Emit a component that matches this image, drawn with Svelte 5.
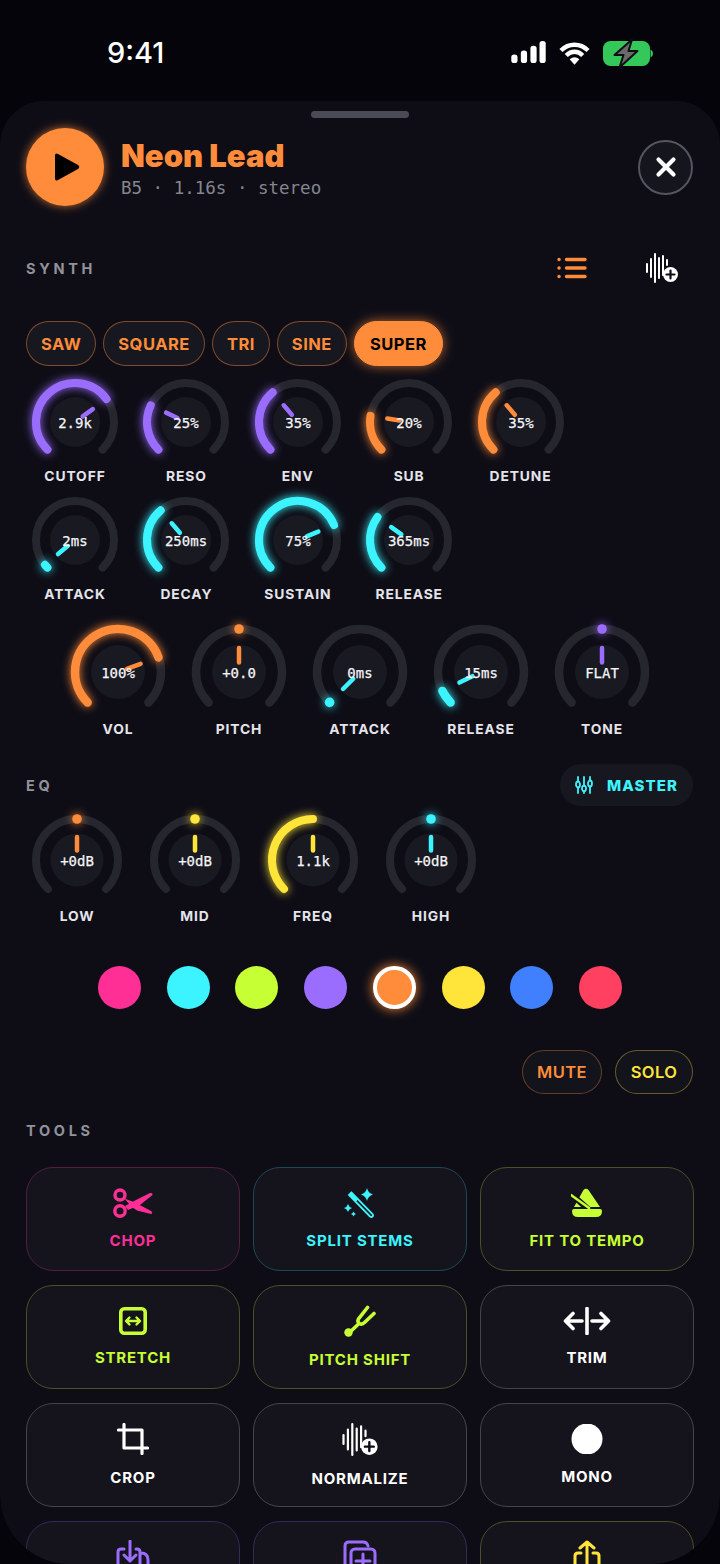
<script>
  const ORANGE = '#ff8c3a', PURPLE = '#9b6dff', CYAN = '#3cf4ff', LIME = '#c6ff33', YELLOW = '#ffe53a', PINK = '#ff2f96';

  const waves = ['SAW', 'SQUARE', 'TRI', 'SINE', 'SUPER'];
  const rowOne = [
    { label: 'CUTOFF', value: '2.9k', pct: 0.7, color: PURPLE },
    { label: 'RESO', value: '25%', pct: 0.26, color: PURPLE },
    { label: 'ENV', value: '35%', pct: 0.35, color: PURPLE },
    { label: 'SUB', value: '20%', pct: 0.2, color: ORANGE },
    { label: 'DETUNE', value: '35%', pct: 0.35, color: ORANGE }
  ];
  const rowTwo = [
    { label: 'ATTACK', value: '2ms', pct: 0.02, color: CYAN },
    { label: 'DECAY', value: '250ms', pct: 0.35, color: CYAN },
    { label: 'SUSTAIN', value: '75%', pct: 0.75, color: CYAN },
    { label: 'RELEASE', value: '365ms', pct: 0.3, color: CYAN }
  ];
  const rowThree = [
    { label: 'VOL', value: '100%', pct: 0.76, color: ORANGE },
    { label: 'PITCH', value: '+0.0', pct: 0.5, dot: true, color: ORANGE },
    { label: 'ATTACK', value: '0ms', pct: 0, dot: true, color: CYAN },
    { label: 'RELEASE', value: '15ms', pct: 0.07, color: CYAN },
    { label: 'TONE', value: 'FLAT', pct: 0.5, dot: true, color: PURPLE }
  ];
  const rowEq = [
    { label: 'LOW', value: '+0dB', pct: 0.5, dot: true, color: ORANGE },
    { label: 'MID', value: '+0dB', pct: 0.5, dot: true, color: YELLOW },
    { label: 'FREQ', value: '1.1k', pct: 0.5, color: YELLOW },
    { label: 'HIGH', value: '+0dB', pct: 0.5, dot: true, color: CYAN }
  ];
  const swatches = [PINK, CYAN, LIME, PURPLE, ORANGE, YELLOW, '#4080ff', '#ff4060'];
  // last row runs off the bottom of the screen, its labels are never seen
  const tools = [
    { name: 'CHOP', icon: 'scissors', color: PINK, border: '#521e40' },
    { name: 'SPLIT STEMS', icon: 'wand', color: CYAN, border: '#1f4855' },
    { name: 'FIT TO TEMPO', icon: 'metronome', color: LIME, border: '#465228' },
    { name: 'STRETCH', icon: 'stretch', color: LIME, border: '#465228' },
    { name: 'PITCH SHIFT', icon: 'fork', color: LIME, border: '#465228' },
    { name: 'TRIM', icon: 'trim', color: '#fff', border: '#44444e' },
    { name: 'CROP', icon: 'crop', color: '#fff', border: '#44444e' },
    { name: 'NORMALIZE', icon: 'wave', color: '#fff', border: '#44444e' },
    { name: 'MONO', icon: 'mono', color: '#fff', border: '#44444e' },
    { name: '', icon: 'import', color: PURPLE, border: '#322b58' },
    { name: '', icon: 'copy', color: PURPLE, border: '#322b58' },
    { name: '', icon: 'share', color: YELLOW, border: '#504d28' }
  ];

  // angle is measured clockwise from 12 o'clock, the sweep runs -135..135
  function polar(c, r, deg) {
    const a = (deg * Math.PI) / 180;
    return [c + r * Math.sin(a), c - r * Math.cos(a)];
  }
  function arc(c, r, from, to) {
    const [x1, y1] = polar(c, r, from);
    const [x2, y2] = polar(c, r, to);
    const large = to - from > 180 ? 1 : 0;
    return `M${x1.toFixed(2)} ${y1.toFixed(2)}A${r} ${r} 0 ${large} 1 ${x2.toFixed(2)} ${y2.toFixed(2)}`;
  }
  function angle(pct) {
    return -135 + pct * 270;
  }
</script>

{#snippet knob(k, box, cell, r, sw, disk, tipOut)}
  {@const c = box / 2}
  {@const a = angle(k.pct)}
  {@const n1 = polar(c, 9.5, a)}
  {@const n2 = polar(c, tipOut, a)}
  {@const p = polar(c, r, a)}
  <div class="knob" style="width:{cell}px;--c:{k.color}">
    <svg width={box} height={box} viewBox="0 0 {box} {box}">
      <path d={arc(c, r, -135, 135)} fill="none" stroke="#26262e" stroke-width={sw} stroke-linecap="round" />
      <circle cx={c} cy={c} r={disk} fill="#191922" />
      {#if k.dot}
        <circle class="glow" cx={p[0]} cy={p[1]} r="4.8" fill={k.color} />
      {:else}
        <path class="glow" d={arc(c, r, -135, a)} fill="none" stroke={k.color} stroke-width={sw} stroke-linecap="round" />
      {/if}
      <line x1={n1[0]} y1={n1[1]} x2={n2[0]} y2={n2[1]} stroke={k.color} stroke-width="4.5" stroke-linecap="round" />
      <text x={c} y={c + 0.5} class="val">{k.value}</text>
    </svg>
    <span class="klabel">{k.label}</span>
  </div>
{/snippet}

{#snippet waveIcon(w, h)}
  <svg width={w} height={h} viewBox="0 0 34 30" fill="none" stroke="#fff" stroke-width="2" stroke-linecap="round">
    <path d="M2 11v8M6 6v18M10 1v28M14 5v20M18 3v19M22 7v5" />
    <circle cx="25.5" cy="21.5" r="7.5" fill="#fff" stroke="none" />
    <path d="M25.5 17.5v8M21.5 21.5h8" stroke="#0e0d16" stroke-width="2.2" />
  </svg>
{/snippet}

{#snippet toolIcon(name)}
  {#if name === 'scissors'}
    <svg width="40" height="30" viewBox="0 0 40 30" fill="none" stroke="currentColor" stroke-width="3.4">
      <circle cx="7" cy="7" r="5" /><circle cx="7" cy="23" r="5.2" />
      <path d="M12 18L24 11.500 37 5q3-.5 2.500 2L27 17l-12 5z" fill="currentColor" stroke="none" />
      <path d="M11.500 10.500L22 14.500l16 8.500q2.500 2 0 3L24 22.500l-6-4z" fill="currentColor" stroke="none" />
    </svg>
  {:else if name === 'wand'}
    <svg width="32" height="30" viewBox="0 0 32 30" fill="none" stroke="currentColor">
      <path d="M7.500 4.500l-2.500 2.500 21 21.500q1.500 1 2.500 0t0-2.500z" stroke-width="1.800" />
      <path d="M7 4.500l-2 2.500 6.500 6.500 2.500-2.500z" fill="currentColor" stroke-width="1" />
      <path d="M23 0q1 5 6 6.500q-5 1.500-6 6.500q-1-5-6-6.500q5-1.500 6-6.500zM4 16q.7 3 4 4q-3.300 1-4 4q-.7-3-4-4q3.300-1 4-4zM9.500 23.500q.4 1.800 2.500 2.500q-2.100.7-2.500 2.500q-.4-1.800-2.500-2.500q2.100-.7 2.500-2.500z" fill="currentColor" stroke="none" />
    </svg>
  {:else if name === 'metronome'}
    <svg width="32" height="30" viewBox="0 0 32 30" fill="none">
      <path d="M12.500 2q2.500-2.500 5 0L29 19H3z" fill="currentColor" />
      <path d="M-1 5L17 21" stroke="#14131b" stroke-width="6" />
      <path d="M0 7L18 20" stroke="currentColor" stroke-width="2.600" stroke-linecap="round" />
      <path d="M3 21h26q2 0 2 2 0 6-6 6H7q-6 0-6-6 0-2 2-2z" fill="currentColor" />
    </svg>
  {:else if name === 'stretch'}
    <svg width="28" height="28" viewBox="0 0 28 28" fill="none" stroke="currentColor" stroke-width="3.600" stroke-linecap="round" stroke-linejoin="round">
      <rect x="1.800" y="1.800" width="24.400" height="24.400" rx="3.500" />
      <path d="M7.500 14h13M10.500 10.500L7 14l3.500 3.500M17.500 10.500L21 14l-3.500 3.500" stroke-width="2.400" />
    </svg>
  {:else if name === 'fork'}
    <svg width="32" height="32" viewBox="0 0 32 32" fill="none" stroke="currentColor" stroke-width="3.600" stroke-linecap="round">
      <path d="M23.500 2.500L14.500 14q-1.500 3 1 4.500 2.500 1.500 5-1L30 8.500M14.500 19L5 28" />
      <circle cx="4.500" cy="27.500" r="4.200" fill="currentColor" stroke="none" />
    </svg>
  {:else if name === 'trim'}
    <svg width="48" height="28" viewBox="0 0 48 28" fill="none" stroke="currentColor" stroke-width="3.600" stroke-linecap="round" stroke-linejoin="round">
      <path d="M24 1.500v25M19 14H3M10 6.500L2.500 14l7.500 7.500M29 14h16M38 6.500l7.500 7.500-7.500 7.500" />
    </svg>
  {:else if name === 'crop'}
    <svg width="32" height="32" viewBox="0 0 32 32" fill="none" stroke="currentColor" stroke-width="3.200" stroke-linecap="round" stroke-linejoin="round">
      <path d="M7 1.500V25h23.500M1.500 7H25v23.500" />
    </svg>
  {:else if name === 'wave'}
    {@render waveIcon(38, 33)}
  {:else if name === 'mono'}
    <svg width="32" height="30" viewBox="0 0 32 30"><circle cx="16" cy="15" r="15.500" fill="currentColor" /></svg>
  {:else if name === 'import'}
    <svg width="34" height="34" viewBox="0 0 34 34" fill="none" stroke="currentColor" stroke-width="3" stroke-linecap="round" stroke-linejoin="round">
      <path d="M14 1v20M8 15l6 6 6-6M8 9H5q-3 0-3 3v13q0 3 3 3h16q3 0 3-3V12q0-3-3-3h-1M25 13q7 0 7 7v12" />
    </svg>
  {:else if name === 'copy'}
    <svg width="34" height="34" viewBox="0 0 34 34" fill="none" stroke="currentColor" stroke-width="3" stroke-linecap="round" stroke-linejoin="round">
      <path d="M2 24V6q0-4 4-4h14q4 0 5 4" /><rect x="8" y="9" width="24" height="24" rx="4" /><path d="M20 14v14M13 21h14" />
    </svg>
  {:else if name === 'share'}
    <svg width="28" height="34" viewBox="0 0 28 34" fill="none" stroke="currentColor" stroke-width="3" stroke-linecap="round" stroke-linejoin="round">
      <path d="M14 24V2M7 8l7-6 7 6M8 13H5q-3 0-3 3v12q0 3 3 3h18q3 0 3-3V16q0-3-3-3h-3" />
    </svg>
  {/if}
{/snippet}

<div class="screen">
  <div class="status">
    <span class="time">9:41</span>
    <div class="status-icons">
      <svg width="35" height="22" viewBox="0 0 36 23" fill="#fff">
        <rect x="0" y="14" width="6.500" height="9" rx="3" /><rect x="10" y="10" width="6.500" height="13" rx="3" />
        <rect x="20" y="5" width="6.500" height="18" rx="3" /><rect x="29.500" y="0" width="6.500" height="23" rx="3" />
      </svg>
      <svg width="31" height="24" viewBox="0 0 32 24" fill="none" stroke="#fff" stroke-width="4.500">
        <path d="M2 9.500C10 1.500 22 1.500 30 9.500M7.500 14.500c5-5 12-5 17 0" />
        <path d="M11 18.500q5-4 10 0L16 24z" fill="#fff" stroke="none" />
      </svg>
      <svg class="battery" width="50" height="25" viewBox="0 0 50 25">
        <rect x="0" y="0" width="47" height="25" rx="7.500" fill="#34c759" />
        <path d="M47.500 8.500q2.500 1 2.500 4t-2.500 4z" fill="#34c759" />
        <path d="M29 -1.500L11.500 14h9L16.500 26.500 34.500 10h-9z" fill="#6a6a6a" stroke="#0e0e12" stroke-width="2" stroke-linejoin="round" />
      </svg>
    </div>
  </div>

  <div class="sheet">
    <div class="grabber"></div>

    <header class="head">
      <button class="play" aria-label="play">
        <svg width="28" height="30" viewBox="0 0 28 30"><path d="M2 3.500q0-3 3-1.500l20 11q2.500 2 0 4L5 28q-3 1.500-3-1.500z" fill="#000" /></svg>
      </button>
      <div class="title-block">
        <h1>Neon Lead</h1>
        <p>B5 · 1.16s · stereo</p>
      </div>
      <button class="close" aria-label="close">
        <svg width="22" height="22" viewBox="0 0 22 22" fill="none" stroke="#fff" stroke-width="4.200" stroke-linecap="round"><path d="M3.500 3.500l15 15M18.500 3.500l-15 15" /></svg>
      </button>
    </header>

    <div class="section-row synth-row">
      <span class="section">SYNTH</span>
      <div class="synth-icons">
        <svg width="30" height="22" viewBox="0 0 30 22" fill="none" stroke={ORANGE} stroke-width="3.400" stroke-linecap="round">
          <path d="M9.500 2.500H28M9.500 11H28M9.500 19.500H28M2 2.500h.1M2 11h.1M2 19.500h.1" />
        </svg>
        {@render waveIcon(34, 30)}
      </div>
    </div>

    <div class="pills">
      {#each waves as w}
        <button class="pill" class:active={w === 'SUPER'}>{w}</button>
      {/each}
    </div>

    <div class="knobs first">
      {#each rowOne as k}{@render knob(k, 88, 98, 39, 8, 25, 22)}{/each}
    </div>
    <div class="knobs second">
      {#each rowTwo as k}{@render knob(k, 88, 98, 39, 8, 25, 22)}{/each}
    </div>
    <div class="knobs big">
      {#each rowThree as k}{@render knob(k, 96, 108, 43, 8.500, 27, 24)}{/each}
    </div>

    <div class="section-row eq-row">
      <span class="section">EQ</span>
      <button class="master">
        <svg width="18" height="18" viewBox="0 0 18 18" fill="none" stroke={CYAN} stroke-width="1.800" stroke-linecap="round">
          <path d="M3 1v4M3 12v5M9 1v9M9 15v2M15 1v3M15 11v6" />
          <ellipse cx="3" cy="8.500" rx="2" ry="3" /><ellipse cx="9" cy="12.500" rx="2" ry="2.800" /><ellipse cx="15" cy="7.500" rx="2" ry="3" />
        </svg>
        MASTER
      </button>
    </div>

    <div class="knobs eq">
      {#each rowEq as k}{@render knob(k, 92, 102, 41, 8, 26.500, 23)}{/each}
    </div>

    <div class="swatches">
      {#each swatches as s}
        <span class="swatch" class:picked={s === ORANGE} style="background:{s}"></span>
      {/each}
    </div>

    <div class="mute-solo">
      <button class="small mute">MUTE</button>
      <button class="small solo">SOLO</button>
    </div>

    <div class="section tools-title">TOOLS</div>

    <div class="tools">
      {#each tools as t}
        <div class="tool" style="color:{t.color};border-color:{t.border}">
          {@render toolIcon(t.icon)}
          <span>{t.name}</span>
        </div>
      {/each}
    </div>
  </div>
</div>

<style>
  :global(body) {
    margin: 0;
    background: #04040a;
  }

  * {
    box-sizing: border-box;
  }

  .screen {
    width: 720px;
    height: 1564px;
    overflow: hidden;
    font-family: Inter, "Liberation Sans", sans-serif;
    color: #fff;
    background: #04040a;
  }

  .status {
    height: 101px;
    padding: 0 67px 0 107px;
    display: flex;
    justify-content: space-between;
    align-items: flex-start;
  }

  .time {
    margin-top: 33px;
    font-size: 29px;
    line-height: 40px;
    font-weight: 500;
  }

  .status-icons {
    margin-top: 41px;
    display: flex;
    gap: 13px;
    align-items: flex-start;
  }

  .battery {
    overflow: visible;
  }

  .sheet {
    height: 1463px;
    overflow: hidden;
    background: #0e0d16;
    border-radius: 44px 44px 70px 70px;
    padding: 10px 26px 0;
  }

  .grabber {
    width: 98px;
    height: 7px;
    border-radius: 4px;
    background: #4b4b56;
    margin: 0 auto 10px;
  }

  .head {
    display: flex;
    align-items: center;
    gap: 17px;
    height: 78px;
  }

  button {
    font-family: inherit;
    padding: 0;
    cursor: pointer;
  }

  .play {
    width: 78px;
    height: 78px;
    border: none;
    border-radius: 50%;
    background: #ff8c3a;
    box-shadow: 0 0 10px rgba(255, 140, 58, 0.75);
    display: flex;
    align-items: center;
    justify-content: center;
    padding-left: 4px;
  }

  .title-block {
    flex: 1;
    padding-top: 3px;
  }

  h1 {
    margin: 0;
    font-size: 31px;
    line-height: 36px;
    font-weight: 900;
    color: #ff8c3a;
  }

  .title-block p {
    margin: 3px 0 0;
    font-family: "DejaVu Sans Mono", monospace;
    font-size: 17.500px;
    line-height: 22px;
    color: #85858e;
  }

  .close {
    width: 55px;
    height: 55px;
    margin-right: 1px;
    border-radius: 50%;
    border: 2px solid #55555f;
    background: #15151d;
    display: flex;
    align-items: center;
    justify-content: center;
  }

  .section {
    padding-top: 2px;
    font-size: 14.500px;
    line-height: 20px;
    font-weight: 700;
    letter-spacing: 3.700px;
    color: #92929a;
  }

  .section-row {
    display: flex;
    justify-content: space-between;
    align-items: center;
  }

  .synth-row {
    margin-top: 47px;
    height: 30px;
  }

  .synth-icons {
    display: flex;
    align-items: center;
    gap: 58px;
    margin-right: 15px;
  }

  .pills {
    margin-top: 38px;
    display: flex;
    gap: 7px;
  }

  .pill {
    height: 45px;
    padding: 0 14px;
    border-radius: 23px;
    border: 1.500px solid rgba(255, 140, 58, 0.45);
    background: #17171f;
    color: #ff8c3a;
    font-size: 16.500px;
    font-weight: 700;
    letter-spacing: 0.500px;
  }

  .pill.active {
    padding: 0 15px;
    background: #ff8c3a;
    border-color: #ff8c3a;
    color: #000;
    box-shadow: 0 0 12px rgba(255, 140, 58, 0.7);
  }

  .knobs {
    display: flex;
    gap: 13.400px;
  }

  .first {
    margin-top: 12px;
  }

  .second {
    margin-top: 10px;
  }

  .big {
    margin-top: 20px;
    justify-content: center;
    gap: 13px;
  }

  .eq {
    margin-top: 8px;
    gap: 16px;
  }

  .knob {
    display: flex;
    flex-direction: column;
    align-items: center;
  }

  .knob svg {
    display: block;
    overflow: visible;
  }

  .glow {
    filter: drop-shadow(0 0 5px var(--c));
  }

  .val {
    font-family: "DejaVu Sans Mono", monospace;
    font-size: 14px;
    fill: #f4f4f7;
    stroke: #f4f4f7;
    stroke-width: 0.25px;
    text-anchor: middle;
    dominant-baseline: central;
  }

  .klabel {
    font-size: 13.800px;
    line-height: 20px;
    font-weight: 700;
    letter-spacing: 0.900px;
    color: #e4e4ea;
  }

  .big .klabel {
    line-height: 18px;
  }

  .eq-row {
    margin-top: 26px;
    height: 42px;
  }

  .master {
    height: 42px;
    width: 133px;
    margin-right: 1px;
    border: none;
    border-radius: 21px;
    background: #17171f;
    color: #3cf4ff;
    font-size: 15px;
    font-weight: 800;
    letter-spacing: 1.100px;
    display: flex;
    align-items: center;
    justify-content: center;
    gap: 14px;
  }

  .swatches {
    margin-top: 39.500px;
    display: flex;
    justify-content: center;
    gap: 25.700px;
  }

  .swatch {
    width: 43px;
    height: 43px;
    border-radius: 50%;
  }

  .swatch.picked {
    border: 4px solid #fff;
    box-shadow: 0 0 12px rgba(255, 140, 58, 1);
  }

  .mute-solo {
    margin-top: 41.500px;
    margin-right: 1px;
    display: flex;
    justify-content: flex-end;
    gap: 13px;
  }

  .small {
    height: 44px;
    border-radius: 22px;
    background: #13131b;
    font-size: 16.500px;
    font-weight: 600;
    letter-spacing: 0.400px;
  }

  .mute {
    width: 80px;
    color: #ff8c3a;
    border: 1.500px solid rgba(255, 140, 58, 0.35);
  }

  .solo {
    width: 78px;
    color: #ffe53a;
    border: 1.500px solid rgba(255, 229, 58, 0.35);
  }

  .tools-title {
    margin-top: 25px;
  }

  .tools {
    margin-top: 26px;
    display: grid;
    grid-template-columns: repeat(3, 214px);
    grid-auto-rows: 104px;
    column-gap: 13px;
    row-gap: 14px;
  }

  .tool {
    border: 1.800px solid;
    border-radius: 27px;
    background: #15141c;
    display: flex;
    flex-direction: column;
    align-items: center;
    justify-content: center;
    gap: 14px;
  }

  .tool span {
    height: 18px;
    font-size: 15px;
    line-height: 18px;
    font-weight: 700;
    letter-spacing: 0.800px;
  }
</style>
